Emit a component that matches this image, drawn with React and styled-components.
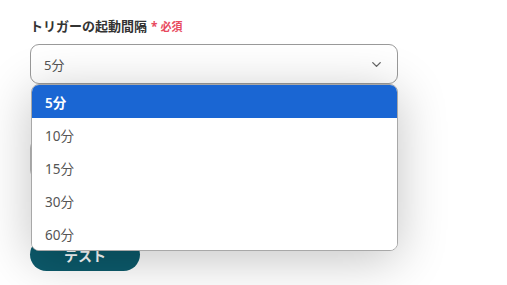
import { useState } from 'react';
import styled, { createGlobalStyle } from 'styled-components';
import { ChevronDown } from 'lucide-react';

const GlobalStyle = createGlobalStyle`
    body {
        margin: 0;
        background: #ffffff;
        font-family: "Noto Sans", "Noto Sans CJK JP", sans-serif;
    }
`;

const Page = styled.div`
    width: 507px;
    height: 285px;
    overflow: hidden;
    padding: 17px 0 0 30px;
    box-sizing: border-box;
`;

const Form = styled.div`
    width: 368px;
    display: flex;
    flex-direction: column;
`;

const Field = styled.div`
    position: relative;
    display: flex;
    flex-direction: column;
    gap: 8px;
    margin-bottom: ${(p) => p.$mb || 0}px;
`;

const Label = styled.div`
    font-size: 13px;
    font-weight: 700;
    line-height: 19px;
    color: #333;
    display: flex;
    align-items: center;
    gap: 4px;
`;

const Required = styled.span`
    font-size: 11px;
    font-weight: 700;
    color: #e84a5f;
    display: flex;
    align-items: center;
    gap: 3px;
`;

const Star = styled.span`
    font-size: 12px;
    font-weight: 700;
`;

const Select = styled.div`
    height: 40px;
    box-sizing: border-box;
    border: 1px solid #9a9a9a;
    border-radius: 9px;
    padding: 0 13px 0 13px;
    display: flex;
    align-items: center;
    justify-content: space-between;
    font-size: 13px;
    color: #555;
    background: #fff;
`;

const Input = styled.div`
    height: 40px;
    box-sizing: border-box;
    border: 1px solid #bbb;
    border-radius: 9px;
    background: #fff;
`;

const Menu = styled.ul`
    position: absolute;
    top: 67px;
    left: 1px;
    right: 0;
    margin: 0;
    padding: 0;
    list-style: none;
    background: #fff;
    border: 1px solid #a8a8a8;
    border-radius: 8px;
    overflow: hidden;
    box-shadow: 0 8px 50px rgba(0, 0, 0, 0.24);
    z-index: 10;
`;

const Option = styled.li`
    height: 33px;
    display: flex;
    align-items: center;
    padding-left: 13px;
    font-size: 13.5px;
    color: ${(p) => (p.$active ? '#fff' : '#555')};
    font-weight: ${(p) => (p.$active ? 600 : 400)};
    background: ${(p) => (p.$active ? '#1a66d3' : '#fff')};
`;

const TestButton = styled.button`
    width: 110px;
    height: 33px;
    border: none;
    border-radius: 17px;
    background: #0c5b6c;
    color: #fff;
    font-family: "Noto Sans", "Noto Sans CJK JP", sans-serif;
    font-size: 14px;
    font-weight: 700;
    cursor: pointer;
`;

const OPTIONS = ['5分', '10分', '15分', '30分', '60分'];

export default function App() {
    const [value, setValue] = useState('5分');
    return (
        <>
            <GlobalStyle />
            <Page>
                <Form>
                    <Field $mb={28}>
                        <Label>
                            トリガーの起動間隔
                            <Required>
                                <Star>*</Star>必須
                            </Required>
                        </Label>
                        <Select>
                            {value}
                            <ChevronDown size={15} color="#666" strokeWidth={2.2} />
                        </Select>
                        <Menu>
                            {OPTIONS.map((o) => (
                                <Option key={o} $active={o === value} onClick={() => setValue(o)}>
                                    {o}
                                </Option>
                            ))}
                        </Menu>
                    </Field>
                    <Field $mb={59}>
                        <Label>&nbsp;</Label>
                        <Input />
                    </Field>
                    <div>
                        <TestButton>テスト</TestButton>
                    </div>
                </Form>
            </Page>
        </>
    );
}
